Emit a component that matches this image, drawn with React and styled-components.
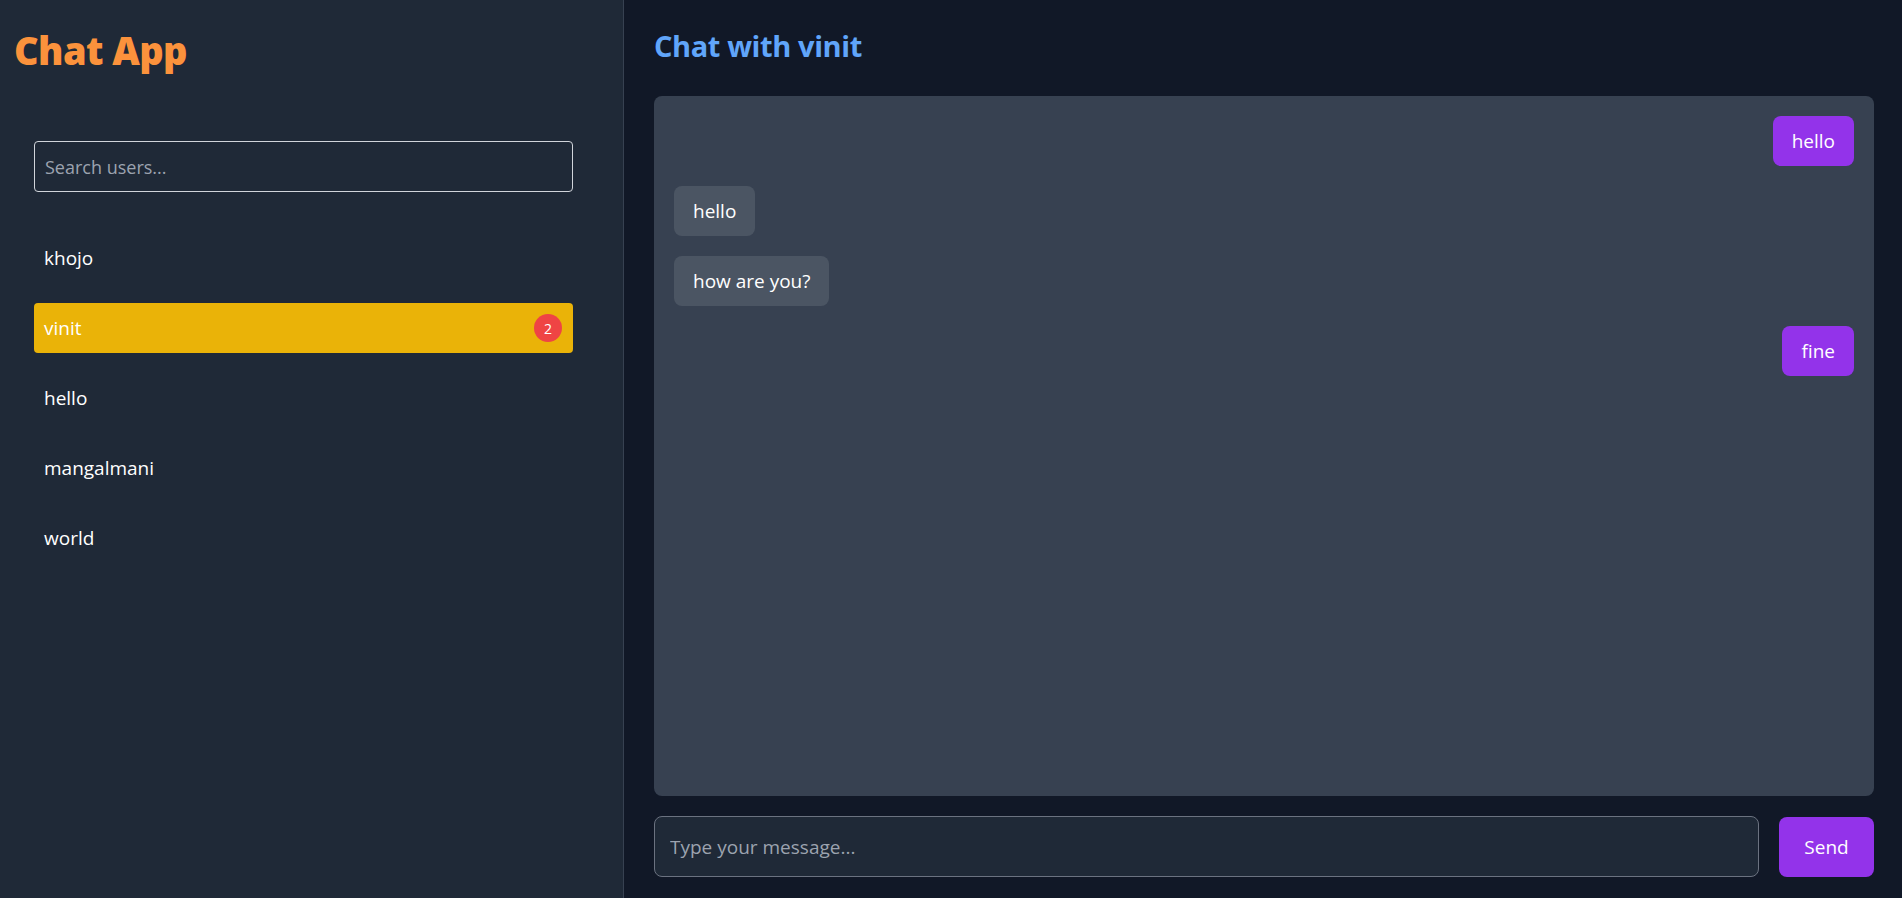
import React from "react";
import styled, { createGlobalStyle } from "styled-components";

const GlobalStyle = createGlobalStyle`
  * { box-sizing: border-box; }
  html, body, #root { margin: 0; height: 100%; }
  body {
    background: #111827;
    font-family: "Open Sans", "Noto Sans", sans-serif;
    color: #fff;
  }
`;

const Shell = styled.div`
  display: flex;
  height: 898px;
  width: 100%;
`;

const Sidebar = styled.aside`
  width: 624px;
  flex-shrink: 0;
  background: #1f2937;
  border-right: 1px solid #374151;
  padding: 29px 50px 0 14px;
  display: flex;
  flex-direction: column;
`;

const AppTitle = styled.h1`
  margin: 0;
  font-size: 38px;
  line-height: 42px;
  font-weight: 800;
  color: #fb923c;
  letter-spacing: -0.6px;
`;

const SideBody = styled.div`
  margin: 70px 0 0 20px;
  display: flex;
  flex-direction: column;
`;

const SearchInput = styled.input`
  height: 51px;
  width: 100%;
  background: transparent;
  border: 1px solid #d1d5db;
  border-radius: 4px;
  padding: 0 10px;
  font-family: inherit;
  font-size: 18px;
  color: #fff;
  outline: none;
  &::placeholder { color: #9ca3af; }
`;

const UserList = styled.ul`
  list-style: none;
  margin: 41px 0 0;
  padding: 0;
  display: flex;
  flex-direction: column;
  gap: 20px;
`;

const UserItem = styled.li`
  height: 50px;
  display: flex;
  align-items: center;
  justify-content: space-between;
  padding: 0 11px 0 10px;
  border-radius: 4px;
  font-size: 19px;
  color: #fff;
  background: ${(p) => (p.$active ? "#eab308" : "transparent")};
`;

const Badge = styled.span`
  width: 28px;
  height: 28px;
  border-radius: 50%;
  background: #ef4444;
  color: #fff;
  font-size: 14px;
  display: flex;
  align-items: center;
  justify-content: center;
`;

const Main = styled.main`
  flex: 1;
  display: flex;
  flex-direction: column;
  padding: 28px 28px 21px 30px;
  min-width: 0;
`;

const ChatTitle = styled.h2`
  margin: 0 0 32px;
  font-size: 29px;
  line-height: 36px;
  font-weight: 700;
  color: #60a5fa;
  letter-spacing: -0.4px;
`;

const Messages = styled.div`
  flex: 1;
  background: #374151;
  border-radius: 8px;
  padding: 20px;
  display: flex;
  flex-direction: column;
  gap: 20px;
`;

const Bubble = styled.div`
  align-self: ${(p) => (p.$mine ? "flex-end" : "flex-start")};
  background: ${(p) => (p.$mine ? "#9333ea" : "#4b5563")};
  color: #fff;
  border-radius: 8px;
  height: 50px;
  display: flex;
  align-items: center;
  padding: 0 19px;
  font-size: 19px;
`;

const Composer = styled.form`
  margin-top: 20px;
  display: flex;
  gap: 20px;
  align-items: center;
`;

const MessageInput = styled.input`
  flex: 1;
  height: 61px;
  background: #1f2937;
  border: 1px solid #6b7280;
  border-radius: 8px;
  padding: 0 15px;
  font-family: inherit;
  font-size: 19px;
  color: #fff;
  outline: none;
  &::placeholder { color: #9ca3af; }
`;

const SendButton = styled.button`
  width: 95px;
  height: 60px;
  border: none;
  border-radius: 8px;
  background: #9333ea;
  color: #fff;
  font-family: inherit;
  font-size: 19px;
  cursor: pointer;
`;

const users = [
  { name: "khojo" },
  { name: "vinit", unread: 2, active: true },
  { name: "hello" },
  { name: "mangalmani" },
  { name: "world" },
];

const messages = [
  { text: "hello", mine: true },
  { text: "hello" },
  { text: "how are you?" },
  { text: "fine", mine: true },
];

export default function App() {
  return (
    <>
      <GlobalStyle />
      <Shell>
        <Sidebar>
          <AppTitle>Chat App</AppTitle>
          <SideBody>
            <SearchInput placeholder="Search users..." />
            <UserList>
              {users.map((u) => (
                <UserItem key={u.name} $active={u.active}>
                  {u.name}
                  {u.unread ? <Badge>{u.unread}</Badge> : null}
                </UserItem>
              ))}
            </UserList>
          </SideBody>
        </Sidebar>
        <Main>
          <ChatTitle>Chat with vinit</ChatTitle>
          <Messages>
            {messages.map((m, i) => (
              <Bubble key={i} $mine={m.mine}>
                {m.text}
              </Bubble>
            ))}
          </Messages>
          <Composer onSubmit={(e) => e.preventDefault()}>
            <MessageInput placeholder="Type your message..." />
            <SendButton type="submit">Send</SendButton>
          </Composer>
        </Main>
      </Shell>
    </>
  );
}
